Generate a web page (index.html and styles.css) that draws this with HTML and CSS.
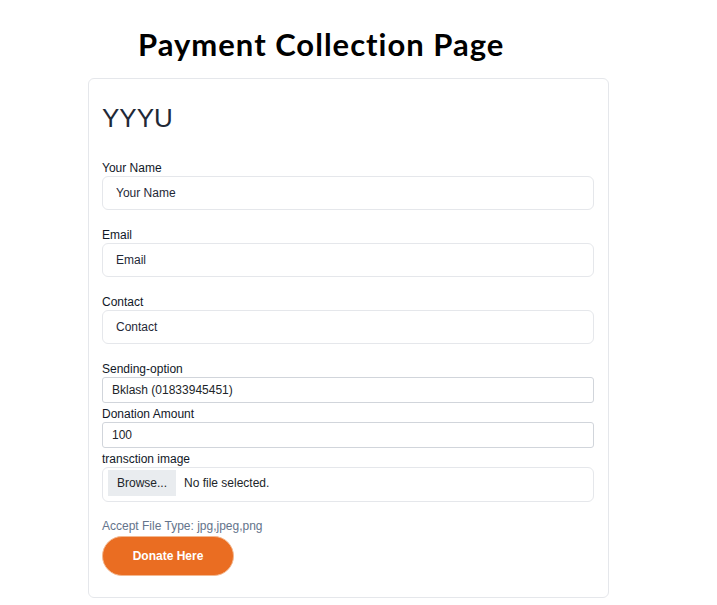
FILE: index.html
```html
<!DOCTYPE html>
<html lang="en">
<head>
    <meta charset="UTF-8">
    <meta name="viewport" content="width=device-width, initial-scale=1.0">
    <title>Payment Collection Page</title>
    <link rel="stylesheet" href="styles.css">
</head>
<body>
    <div class="page-header">
        <h1>Payment Collection Page</h1>
    </div>
    <div class="card">
        <h2 class="card-title">YYYU</h2>
        <form>
            <div class="field">
                <label for="name">Your Name</label>
                <input class="text-input" id="name" type="text" placeholder="Your Name">
            </div>
            <div class="field">
                <label for="email">Email</label>
                <input class="text-input" id="email" type="email" placeholder="Email">
            </div>
            <div class="field">
                <label for="contact">Contact</label>
                <input class="text-input" id="contact" type="text" placeholder="Contact">
            </div>
            <div class="field">
                <label for="option">Sending-option</label>
                <input class="small-input" id="option" type="text" value="Bklash (01833945451)">
            </div>
            <div class="field small">
                <label for="amount">Donation Amount</label>
                <input class="small-input" id="amount" type="text" value="100">
            </div>
            <div class="field small">
                <label>transction image</label>
                <div class="file-box">
                    <span class="file-button">Browse...</span>
                    <span class="file-name">No file selected.</span>
                </div>
            </div>
            <p class="hint">Accept File Type: jpg,jpeg,png</p>
            <button type="button" class="donate-button">Donate Here</button>
        </form>
    </div>
</body>
</html>
```

FILE: styles.css
```css
body {
    font-family: "Liberation Sans", Arial, sans-serif;
    font-size: 12px;
    margin: 0;
    padding: 0;
    background-color: #ffffff;
    color: #1f2937;
}
.page-header {
    padding: 26px 0 0 138px;
}
h1 {
    font-family: Lato, "Open Sans", sans-serif;
    font-weight: 700;
    font-size: 31px;
    letter-spacing: 1px;
    line-height: 36px;
    margin: 0;
    color: #000;
}
.card {
    box-sizing: border-box;
    width: 521px;
    margin: 16px 0 0 88px;
    padding: 23px 14px 21px 13px;
    border: 1px solid #e5e7eb;
    border-radius: 6px;
}
.card-title {
    font-family: "Liberation Sans", Arial, sans-serif;
    font-size: 26px;
    font-weight: 400;
    line-height: 32px;
    margin: 0 0 26px;
    color: #1f2937;
}
.field {
    margin-top: 17px;
}
.field.small {
    margin-top: 3px;
}
.field label {
    display: block;
    line-height: 16px;
    color: #111827;
}
.text-input,
.small-input {
    display: block;
    box-sizing: border-box;
    width: 100%;
    font-family: "Liberation Sans", Arial, sans-serif;
    font-size: 12px;
    color: #1f2937;
    margin: 0;
    outline: none;
}
.text-input {
    height: 34px;
    padding: 0 13px;
    border: 1px solid #e5e7eb;
    border-radius: 6px;
}
.text-input::placeholder {
    color: #1f2937;
    opacity: 1;
}
.small-input {
    height: 26px;
    padding: 0 9px;
    border: 1px solid #d1d5db;
    border-radius: 3px;
    color: #212529;
}
.file-box {
    box-sizing: border-box;
    height: 35px;
    padding: 2px 5px;
    border: 1px solid #e5e7eb;
    border-radius: 6px;
    display: flex;
    align-items: flex-start;
}
.file-button {
    width: 68px;
    height: 26px;
    line-height: 26px;
    text-align: center;
    background-color: #e9ecef;
    color: #212529;
}
.file-name {
    line-height: 26px;
    margin-left: 8px;
    color: #212529;
}
.hint {
    margin: 16px 0 0;
    line-height: 16px;
    color: #64748b;
}
.donate-button {
    display: block;
    box-sizing: border-box;
    width: 132px;
    height: 40px;
    margin-top: 2px;
    border: 1px solid #f4b88f;
    border-radius: 20px;
    background-color: #ea6d22;
    color: #ffffff;
    font-family: "Liberation Sans", Arial, sans-serif;
    font-size: 12px;
    font-weight: 700;
    cursor: pointer;
}
```
